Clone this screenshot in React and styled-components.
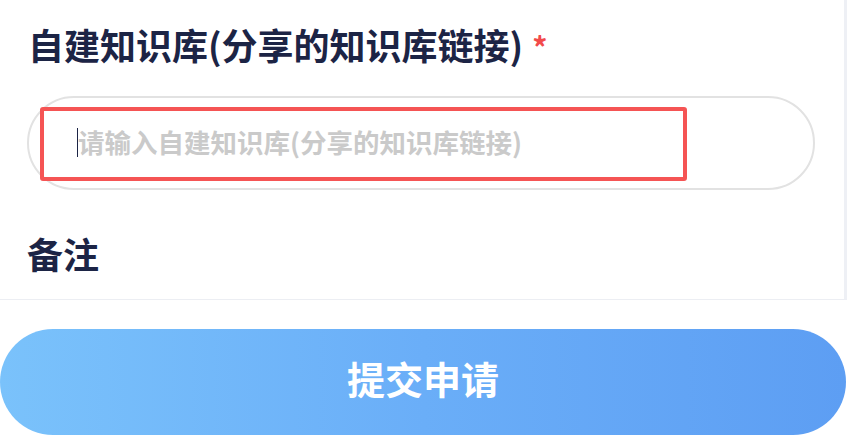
import React from "react";
import styled, { createGlobalStyle } from "styled-components";

const GlobalStyle = createGlobalStyle`
  html, body {
    margin: 0;
    padding: 0;
    background: #ffffff;
    font-family: "Noto Sans CJK SC", "Noto Sans", sans-serif;
  }
  * { box-sizing: border-box; }
`;

const Page = styled.div`
  width: 847px;
  height: 437px;
  display: flex;
  flex-direction: column;
  overflow: hidden;
  background: #ffffff;
`;

const FormArea = styled.div`
  height: 300px;
  flex-shrink: 0;
  overflow: hidden;
  padding: 19px 29px 0 27px;
  border-bottom: 1px solid #eceef3;
  border-right: 3px solid #eef0f5;
  display: flex;
  flex-direction: column;
`;

const Label = styled.div`
  font-size: 36px;
  line-height: 50px;
  font-weight: 700;
  color: #1c2445;
  padding-left: ${(p) => p.$indent || 0}px;
  margin-top: ${(p) => p.$top || 0}px;
  display: flex;
  align-items: center;
`;

const Required = styled.span`
  color: #f24a4a;
  font-size: 30px;
  font-weight: 700;
  margin-left: 9px;
  line-height: 1;
  transform: translateY(2px);
`;

const FieldWrap = styled.div`
  position: relative;
  margin-top: 27px;
  height: 94px;
`;

const Field = styled.input`
  width: 100%;
  height: 100%;
  border: 2px solid #e2e2e2;
  border-radius: 47px;
  padding: 0 0 3px 49px;
  font-family: inherit;
  font-size: 26.5px;
  font-weight: 700;
  color: #1c2445;
  background: #ffffff;
  outline: none;

  &::placeholder {
    color: #cacaca;
  }
`;

const Caret = styled.span`
  position: absolute;
  left: 50px;
  top: 32px;
  width: 1px;
  height: 29px;
  background: #1c2445;
`;

const Highlight = styled.div`
  position: absolute;
  left: 13px;
  top: 11px;
  width: 647px;
  height: 74px;
  border: 4px solid #f55454;
  border-radius: 3px;
  pointer-events: none;
`;

const Footer = styled.div`
  flex: 1;
  padding-top: 29px;
  display: flex;
`;

const SubmitButton = styled.button`
  width: 846px;
  height: 106px;
  border: none;
  border-radius: 53px;
  background: linear-gradient(90deg, #7ac2fb 0%, #6aaef8 50%, #5d9ef3 100%);
  color: #ffffff;
  font-family: inherit;
  font-size: 38px;
  font-weight: 700;
  cursor: pointer;
  padding: 0 0 10px;
`;

export default function App() {
  return (
    <Page>
      <GlobalStyle />
      <FormArea>
        <Label $indent={1}>
          自建知识库(分享的知识库链接)
          <Required>*</Required>
        </Label>
        <FieldWrap>
          <Field placeholder="请输入自建知识库(分享的知识库链接)" />
          <Caret />
          <Highlight />
        </FieldWrap>
        <Label $top={38}>备注</Label>
      </FormArea>
      <Footer>
        <SubmitButton>提交申请</SubmitButton>
      </Footer>
    </Page>
  );
}
